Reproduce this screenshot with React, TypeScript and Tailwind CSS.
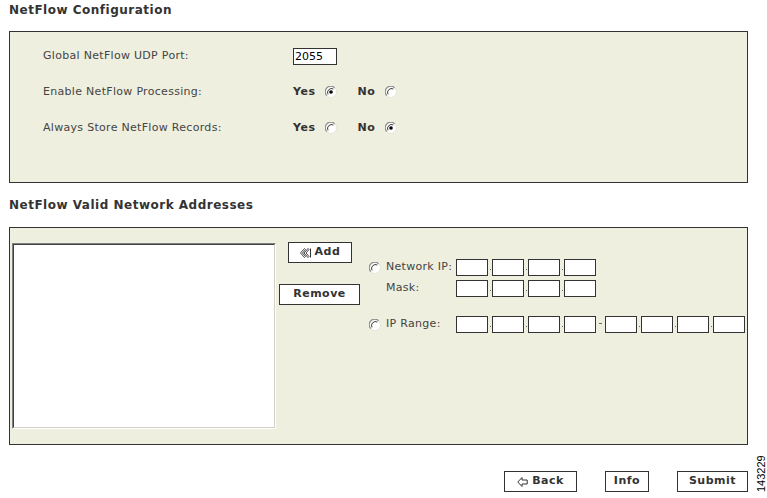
import React from 'react';

const Radio: React.FC<{ checked?: boolean }> = ({ checked }) => (
    <svg width="12" height="12" viewBox="0 0 12 12" className="shrink-0">
        <circle cx="6" cy="6" r="5.5" fill="#ffffff" stroke="#e4e4da" strokeWidth="1" />
        <path d="M1.8 9.6 A5.3 5.3 0 0 1 9.6 1.8" stroke="#8c8c8c" strokeWidth="1.2" fill="none" />
        <path d="M3 8.4 A4 4 0 0 1 8.4 3" stroke="#3c3c3c" strokeWidth="1" fill="none" />
        {checked && <circle cx="6" cy="6" r="1.8" fill="#000000" />}
    </svg>
);

const Box: React.FC = () => <div className="w-[32px] h-[17px] border border-[#333] bg-white shrink-0" />;

const Dot: React.FC = () => (
    <div className="w-[4px] h-[17px] flex items-center justify-center shrink-0">
        <div className="w-[1px] h-[1px] bg-[#666] mt-[4px]" />
    </div>
);

const Dash: React.FC = () => (
    <div className="w-[9px] h-[17px] flex items-center justify-center shrink-0">
        <div className="w-[3px] h-[1px] bg-[#666] mt-[-2px]" />
    </div>
);

const Quad: React.FC = () => (
    <>
        <Box />
        <Dot />
        <Box />
        <Dot />
        <Box />
        <Dot />
        <Box />
    </>
);

const AddIcon = () => (
    <svg width="11" height="10" viewBox="0 0 11 10" className="mr-[4px]">
        <path d="M4.5 0.5 L0.5 5 L4.5 9.5 L5.5 8.5 L2.5 5 L5.5 1.5 Z" fill="none" stroke="#333" strokeWidth="0.9" />
        <path d="M8 0.5 L4 5 L8 9.5 L9 8.5 L6 5 L9 1.5 Z" fill="none" stroke="#333" strokeWidth="0.9" />
        <path d="M10.5 0.5 V9.5" stroke="#333" strokeWidth="1" />
    </svg>
);

const BackIcon = () => (
    <svg width="11" height="10" viewBox="0 0 11 10" className="mr-[4px]">
        <path d="M5 0.5 L0.8 5 L5 9.5 V7 H10.2 V3 H5 Z" fill="none" stroke="#333" strokeWidth="1" />
    </svg>
);

const App: React.FC = () => {
    return (
        <div className="relative w-[767px] h-[498px] bg-white font-['DejaVu_Sans',Verdana,sans-serif] text-[11px] tracking-[0.3px] text-[#444] overflow-hidden">
            <div className="pl-[9px] pr-[19px]">
                <h2 className="h-[31px] pt-[3px] leading-[14px] text-[12px] font-bold tracking-[0.5px] text-[#333]">NetFlow Configuration</h2>

                <div className="h-[152px] border border-[#333] bg-[#efefdf] pt-[6px] pl-[33px]">
                    <div className="grid grid-cols-[250px_1fr]">
                        <div className="h-[36px] flex items-center">Global NetFlow UDP Port:</div>
                        <div className="h-[36px] flex items-center">
                            <div className="w-[44px] h-[17px] border border-[#333] bg-white text-black leading-[15px] pl-[1px] tracking-normal">2055</div>
                        </div>

                        <div className="h-[36px] flex items-center">Enable NetFlow Processing:</div>
                        <div className="h-[36px] flex items-center">
                            <span className="font-bold text-[#333] tracking-[0.5px]">Yes</span>
                            <span className="ml-[10px]"><Radio checked /></span>
                            <span className="ml-[20px] font-bold text-[#333] tracking-[0.5px]">No</span>
                            <span className="ml-[10px]"><Radio /></span>
                        </div>

                        <div className="h-[36px] flex items-center">Always Store NetFlow Records:</div>
                        <div className="h-[36px] flex items-center">
                            <span className="font-bold text-[#333] tracking-[0.5px]">Yes</span>
                            <span className="ml-[10px]"><Radio /></span>
                            <span className="ml-[20px] font-bold text-[#333] tracking-[0.5px]">No</span>
                            <span className="ml-[10px]"><Radio checked /></span>
                        </div>
                    </div>
                </div>

                <h2 className="h-[44px] flex items-center text-[12px] font-bold tracking-[0.5px] text-[#333]">NetFlow Valid Network Addresses</h2>

                <div className="h-[218px] border border-[#333] bg-[#efefdf] flex items-start pl-[2px]">
                    <div className="mt-[15px] w-[264px] h-[186px] border border-t-[#808080] border-l-[#808080] border-b-white border-r-white">
                        <div className="w-full h-full bg-white border border-t-[#404040] border-l-[#404040] border-b-[#d4d0c8] border-r-[#d4d0c8]" />
                    </div>

                    <div className="ml-[3px] w-[81px] pt-[14px] flex flex-col items-center">
                        <button className="w-[64px] h-[21px] border border-[#333] bg-white flex items-center justify-center font-bold tracking-[0.5px] text-[#333] ml-[1px]">
                            <AddIcon />Add
                        </button>
                        <button className="mt-[21px] w-[81px] h-[21px] border border-[#333] bg-white flex items-center justify-center font-bold tracking-[0.5px] text-[#333]">
                            Remove
                        </button>
                    </div>

                    <div className="ml-[9px] pt-[31px] flex flex-col">
                        <div className="flex items-center h-[17px]">
                            <Radio />
                            <span className="ml-[5px] w-[70px]">Network IP:</span>
                            <Quad />
                        </div>
                        <div className="mt-[4px] flex items-center h-[17px]">
                            <span className="ml-[17px] w-[70px]">Mask:</span>
                            <Quad />
                        </div>
                        <div className="mt-[19px] flex items-center h-[17px]">
                            <Radio />
                            <span className="ml-[5px] w-[70px]">IP Range:</span>
                            <Quad />
                            <Dash />
                            <Quad />
                        </div>
                    </div>
                </div>

                <div className="mt-[26px] flex justify-end gap-[28px]">
                    <button className="w-[73px] h-[21px] border border-[#333] bg-white flex items-center justify-center font-bold tracking-[0.5px] text-[#333]">
                        <BackIcon />Back
                    </button>
                    <button className="w-[44px] h-[21px] border border-[#333] bg-white flex items-center justify-center font-bold tracking-[0.5px] text-[#333]">
                        Info
                    </button>
                    <button className="w-[71px] h-[21px] border border-[#333] bg-white flex items-center justify-center font-bold tracking-[0.5px] text-[#333]">
                        Submit
                    </button>
                </div>
            </div>

            <div className="absolute left-[756px] top-[452px] w-[11px] h-[44px] flex items-center justify-center font-['Liberation_Sans',Arial,sans-serif] text-[11px] tracking-normal text-black [writing-mode:vertical-rl] rotate-180">
                143229
            </div>
        </div>
    );
};

export default App;
